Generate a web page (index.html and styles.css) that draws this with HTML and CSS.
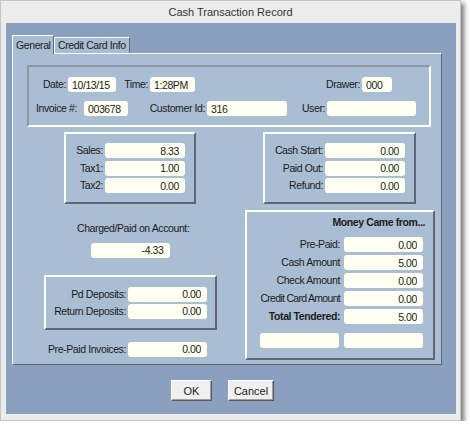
FILE: index.html
```html
<!DOCTYPE html>
<html lang="en">
<head>
  <meta charset="UTF-8">
  <title>Cash Transaction Record</title>
  <link rel="stylesheet" href="styles.css">
</head>
<body>

  <div class="ventana">
    <div class="titulo">Cash Transaction Record</div>

    <div class="cliente">
      <!-- Pestañas -->
      <div class="pestanas">
        <div class="pestana activa">General</div>
        <div class="pestana">Credit Card Info</div>
      </div>

      <div class="panel">
        <!-- Cabecera -->
        <div class="cabecera">
          <div class="fila1">
            <label class="etq">Date:</label>
            <input class="campo" type="text" value="10/13/15" readonly>
            <label class="etq">Time:</label>
            <input class="campo" type="text" value="1:28PM" readonly>
            <label class="etq">Drawer:</label>
            <input class="campo" type="text" value="000" readonly>
          </div>
          <div class="fila2">
            <label class="etq etq-inv">Invoice #:</label>
            <input class="campo" type="text" value="003678" readonly>
            <label class="etq">Customer Id:</label>
            <input class="campo" type="text" value="316" readonly>
            <label class="etq">User:</label>
            <input class="campo" type="text" value="" readonly>
          </div>
        </div>

        <div class="inferior">
          <!-- Columna izquierda -->
          <div class="col-izq">
            <div class="caja caja-ventas">
              <div class="rejilla rejilla-ventas">
                <label class="etq">Sales:</label>
                <input class="campo num" type="text" value="8.33" readonly>
                <label class="etq">Tax1:</label>
                <input class="campo num" type="text" value="1.00" readonly>
                <label class="etq">Tax2:</label>
                <input class="campo num" type="text" value="0.00" readonly>
              </div>
            </div>

            <div class="cargo">
              <div class="cargo-etq">Charged/Paid on Account:</div>
              <input class="campo num cargo-campo" type="text" value="-4.33" readonly>
            </div>

            <div class="caja caja-depositos">
              <div class="rejilla rejilla-depositos">
                <label class="etq">Pd Deposits:</label>
                <input class="campo num" type="text" value="0.00" readonly>
                <label class="etq">Return Deposits:</label>
                <input class="campo num" type="text" value="0.00" readonly>
              </div>
            </div>

            <div class="rejilla rejilla-prepago">
              <label class="etq">Pre-Paid Invoices:</label>
              <input class="campo num" type="text" value="0.00" readonly>
            </div>
          </div>

          <!-- Columna derecha -->
          <div class="col-der">
            <div class="caja caja-caja">
              <div class="rejilla rejilla-caja">
                <label class="etq">Cash Start:</label>
                <input class="campo num" type="text" value="0.00" readonly>
                <label class="etq">Paid Out:</label>
                <input class="campo num" type="text" value="0.00" readonly>
                <label class="etq">Refund:</label>
                <input class="campo num" type="text" value="0.00" readonly>
              </div>
            </div>

            <div class="caja caja-dinero">
              <div class="dinero-titulo">Money Came from...</div>
              <div class="rejilla rejilla-dinero">
                <label class="etq">Pre-Paid:</label>
                <input class="campo num" type="text" value="0.00" readonly>
                <label class="etq">Cash Amount</label>
                <input class="campo num" type="text" value="5.00" readonly>
                <label class="etq">Check Amount</label>
                <input class="campo num" type="text" value="0.00" readonly>
                <label class="etq estrecha">Credit Card Amount</label>
                <input class="campo num" type="text" value="0.00" readonly>
                <label class="etq negrita">Total Tendered:</label>
                <input class="campo num" type="text" value="5.00" readonly>
              </div>
              <div class="vacios">
                <input class="campo" type="text" value="" readonly>
                <input class="campo" type="text" value="" readonly>
              </div>
            </div>
          </div>
        </div>
      </div>

      <!-- Botones -->
      <div class="botones">
        <button class="boton boton-ok">OK</button>
        <button class="boton boton-cancel">Cancel</button>
      </div>
    </div>
  </div>

</body>
</html>
```

FILE: styles.css
```css
* {
  box-sizing: border-box;
}

body {
  margin: 0;
  background: #ffffff;
  font-family: 'Liberation Sans', Arial, sans-serif;
  font-size: 10.5px;
  letter-spacing: -0.4px;
  color: #1c1c1c;
}

.ventana {
  width: 461px;
  height: 421px;
  background: #ececec;
  border: 1px solid #c4c4c4;
  box-shadow: 3px 3px 5px rgba(0,0,0,0.55);
}

.titulo {
  height: 22px;
  line-height: 22px;
  text-align: center;
  font-size: 11px;
  letter-spacing: 0;
  color: #333;
}

.cliente {
  margin: 0 4px 0 5px;
  height: 391px;
  background: #8ba0bf;
  padding: 12px 0 0 6px;
}

/* Pestañas */
.pestanas {
  display: flex;
  align-items: flex-end;
  height: 18px;
}

.pestana {
  height: 16px;
  line-height: 15px;
  padding: 0 3px;
  background: #a9bdd3;
  border: 1px solid #ffffff;
  border-right-color: #5f6775;
  border-bottom: none;
}

.pestana.activa {
  position: relative;
  z-index: 1;
  height: 19px;
  width: 42px;
  margin-bottom: -1px;
  line-height: 18px;
  padding: 0 3px;
}

.panel {
  width: 430px;
  height: 312px;
  background: #a9bdd3;
  border: 1px solid #ffffff;
  border-right-color: #5f6775;
  border-bottom-color: #5f6775;
}

/* Campos */
.campo {
  display: block;
  width: 100%;
  height: 15px;
  margin: 0;
  padding: 0 4px;
  border: none;
  border-radius: 3px;
  background: #fffff2;
  font-family: inherit;
  font-size: 10.5px;
  letter-spacing: -0.4px;
  color: #1c1c1c;
  outline: none;
}

.num {
  text-align: right;
  padding-right: 6px;
}

.etq {
  display: block;
  text-align: right;
  padding-right: 2px;
  line-height: 15px;
  white-space: nowrap;
}

.negrita {
  font-weight: bold;
}

.estrecha {
  letter-spacing: -0.7px;
}

/* Cabecera */
.cabecera {
  width: 404px;
  height: 62px;
  margin: 11px 0 0 14px;
  padding-top: 10px;
  border: 2px solid;
  border-color: #8d96a3 #ffffff #ffffff #8d96a3;
}

.fila1,
.fila2 {
  display: grid;
  grid-template-rows: 15px;
}

.fila1 {
  grid-template-columns: 39px 48px 34px 45px 167px 30px;
}

.fila2 {
  margin-top: 9px;
  grid-template-columns: 55px 44px 79px 80px 40px 89px;
}

.etq-inv {
  padding-right: 7px;
}

/* Parte inferior */
.inferior {
  display: grid;
  grid-template-columns: 227px 201px;
}

.caja {
  border: 2px solid;
  border-color: #ffffff #5f6775 #5f6775 #ffffff;
}

.rejilla {
  display: grid;
  grid-auto-rows: 15px;
}

.caja-ventas {
  width: 132px;
  height: 72px;
  margin: 5px 0 0 51px;
  padding-top: 9px;
}

.rejilla-ventas {
  grid-template-columns: 39px 80px;
  row-gap: 2.5px;
}

.cargo {
  width: 106px;
  margin: 18px 0 0 64px;
  text-align: center;
}

.cargo-etq {
  line-height: 13px;
  white-space: nowrap;
}

.cargo-campo {
  width: 79px;
  margin: 7.5px auto 0;
}

.caja-depositos {
  width: 173px;
  height: 55px;
  margin: 17px 0 0 31px;
  padding-top: 10px;
}

.rejilla-depositos {
  grid-template-columns: 82px 79px;
  row-gap: 2px;
}

.rejilla-prepago {
  grid-template-columns: 82px 79px;
  margin: 12px 0 0 33px;
}

.caja-caja {
  width: 153px;
  height: 72px;
  margin: 5px 0 0 23px;
  padding-top: 9px;
}

.rejilla-caja {
  grid-template-columns: 60px 80px;
  row-gap: 2.5px;
}

.caja-dinero {
  width: 190px;
  height: 150px;
  margin: 6px 0 0 5px;
  padding-top: 4px;
}

.dinero-titulo {
  height: 13px;
  line-height: 13px;
  text-align: right;
  padding-right: 8px;
  font-weight: bold;
}

.rejilla-dinero {
  margin-top: 8px;
  grid-template-columns: 97px 79px;
  row-gap: 3px;
}

.rejilla-dinero .etq {
  padding-right: 4px;
}

.vacios {
  display: flex;
  gap: 5px;
  margin: 9px 0 0 13px;
}

.vacios .campo {
  width: 79px;
}

/* Botones */
.botones {
  display: flex;
  margin: 15px 0 0 159px;
}

.boton {
  height: 21px;
  padding: 0;
  background: #f0f0f0;
  border: 1px solid;
  border-color: #ffffff #5a5a5a #5a5a5a #ffffff;
  box-shadow: inset -1px -1px 0 #a0a0a0;
  font-family: inherit;
  font-size: 11px;
  letter-spacing: 0;
  color: #1c1c1c;
  cursor: pointer;
}

.boton-ok {
  width: 41px;
}

.boton-cancel {
  width: 46px;
  margin-left: 16px;
}
```
